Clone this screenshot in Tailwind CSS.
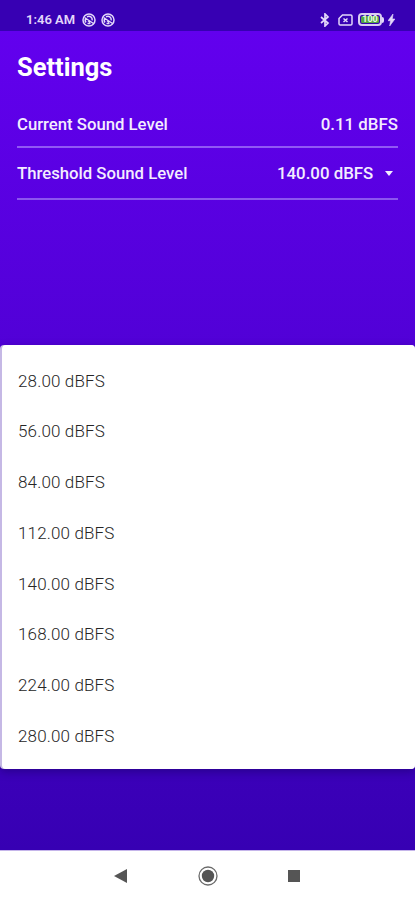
<!DOCTYPE html>
<html lang="en">
<head>
    <meta charset="UTF-8">
    <meta name="viewport" content="width=device-width, initial-scale=1.0">
    <title>Settings</title>
    <script src="https://cdn.jsdelivr.net/npm/@tailwindcss/browser@4"></script>
</head>
<body class="font-[Roboto,sans-serif] bg-white">
    <div class="w-[415px] h-[900px] flex flex-col overflow-hidden">
        <!-- Status bar -->
        <header class="h-[31px] shrink-0 bg-[#3700b3] text-[#e3d8fa] flex items-center justify-between pl-[26px] pr-[20px] pt-[8px]">
            <div class="flex items-center gap-[5px]">
                <span class="text-[13px] leading-4 font-semibold w-[51px] whitespace-nowrap">1:46 AM</span>
                <svg class="w-[14px] h-[14px]" viewBox="0 0 14 14" fill="none" stroke="currentColor" stroke-width="1.5">
                    <circle cx="7" cy="7" r="6"/>
                    <path d="M2.5 4.5l9 6M4 9.5a3.3 3.3 0 0 1 .5-4.5M5 3.8c3-1.3 5.5.5 5.2 3.6M5.5 10.5h3M6 7.5l2 2"/>
                </svg>
                <svg class="w-[14px] h-[14px]" viewBox="0 0 14 14" fill="none" stroke="currentColor" stroke-width="1.5">
                    <circle cx="7" cy="7" r="6"/>
                    <path d="M2.5 4.5l9 6M4 9.5a3.3 3.3 0 0 1 .5-4.5M5 3.8c3-1.3 5.5.5 5.2 3.6M5.5 10.5h3M6 7.5l2 2"/>
                </svg>
            </div>
            <div class="flex items-center">
                <svg class="w-[10px] h-[14px] mr-[8px]" viewBox="0 0 10 14" fill="none" stroke="currentColor" stroke-width="1.7">
                    <path d="M1 4l7 6-3 3V1l3 3-7 6"/>
                </svg>
                <svg class="w-[15px] h-[12px] mr-[5px]" viewBox="0 0 15 12" fill="none" stroke="currentColor" stroke-width="1.5">
                    <path d="M4.5 1h8.2q1.3 0 1.3 1.3v7.4q0 1.3-1.3 1.3H2.3Q1 11 1 9.7V4.5z"/>
                    <path d="M5.5 4.5l4 3.5M9.5 4.5l-4 3.5"/>
                </svg>
                <div class="w-[24px] h-[13px] rounded-[4px] border-2 border-[#d9cdf2] p-px">
                    <div class="h-full rounded-[1.5px] bg-[#55a445] text-[9px] leading-[7.5px] font-bold text-center text-[#e8ffe0]">100</div>
                </div>
                <div class="w-[2px] h-[6px] bg-[#e3d8fa] rounded-r-sm mr-[4px]"></div>
                <svg class="w-[7px] h-[12px]" viewBox="0 0 7 12" fill="currentColor" stroke="currentColor" stroke-width=".6">
                    <path d="M5 0L0 6.7h2.5L1.7 12l5.2-7H4.300z"/>
                </svg>
            </div>
        </header>

        <!-- Settings screen -->
        <main class="h-[819px] shrink-0 bg-linear-to-b from-[#6200ee] to-[#3700b3] text-[#f3edff]">
            <div class="px-[17px] h-[314px]">
                <h1 class="pt-[20px] text-[25.5px] leading-8 font-bold text-white">Settings</h1>
                <div class="mt-[18px] h-[47px] pt-[13px] border-b-2 border-[#9159f4] flex justify-between text-[17px] leading-5 font-medium">
                    <span class="origin-left scale-x-[.983] whitespace-nowrap">Current Sound Level</span>
                    <span class="origin-right scale-x-[.99] whitespace-nowrap">0.11 dBFS</span>
                </div>
                <div class="h-[52px] pt-[15px] border-b-2 border-[#8c56ef] flex text-[17px] leading-5 font-medium">
                    <span class="origin-left scale-x-[.983] whitespace-nowrap">Threshold Sound Level</span>
                    <span class="ml-auto origin-right scale-x-[.99] whitespace-nowrap">140.00 dBFS</span>
                    <svg class="w-[8px] h-[5px] mt-[8px] ml-[12px] mr-[5px]" viewBox="0 0 8 5" fill="currentColor">
                        <path d="M0 0h8L4 5z"/>
                    </svg>
                </div>
            </div>

            <!-- Dropdown list -->
            <div class="h-[424px] bg-[#c5b8e5] rounded-[4px] pl-[2px] shadow-[0_3px_8px_rgba(20,0,90,0.45)]">
                <ul class="h-full bg-white rounded-[4px] pt-[11px] pl-[16px] text-[17px] font-light text-[#262626] tracking-[.15px]">
                    <li class="h-[50.75px] flex items-center">28.00 dBFS</li>
                    <li class="h-[50.75px] flex items-center">56.00 dBFS</li>
                    <li class="h-[50.75px] flex items-center">84.00 dBFS</li>
                    <li class="h-[50.75px] flex items-center">112.00 dBFS</li>
                    <li class="h-[50.75px] flex items-center">140.00 dBFS</li>
                    <li class="h-[50.75px] flex items-center">168.00 dBFS</li>
                    <li class="h-[50.75px] flex items-center">224.00 dBFS</li>
                    <li class="h-[50.75px] flex items-center">280.00 dBFS</li>
                </ul>
            </div>
        </main>

        <!-- Navigation bar -->
        <nav class="h-[50px] shrink-0 bg-white border-t border-[#c5b5ea] text-[#555] flex items-center pl-[114px]">
            <svg class="w-[13px] h-[14px]" viewBox="0 0 13 14" fill="currentColor">
                <path d="M0 7L13 0v14z"/>
            </svg>
            <svg class="w-[20px] h-[20px] ml-[71px]" viewBox="0 0 20 20">
                <circle cx="10" cy="10" r="9" fill="none" stroke="#6b6b6b" stroke-width="1.3"/>
                <circle cx="10" cy="10" r="6.2" fill="currentColor"/>
            </svg>
            <div class="w-[12px] h-[12px] ml-[70px] bg-[#555]"></div>
        </nav>
    </div>
</body>
</html>
